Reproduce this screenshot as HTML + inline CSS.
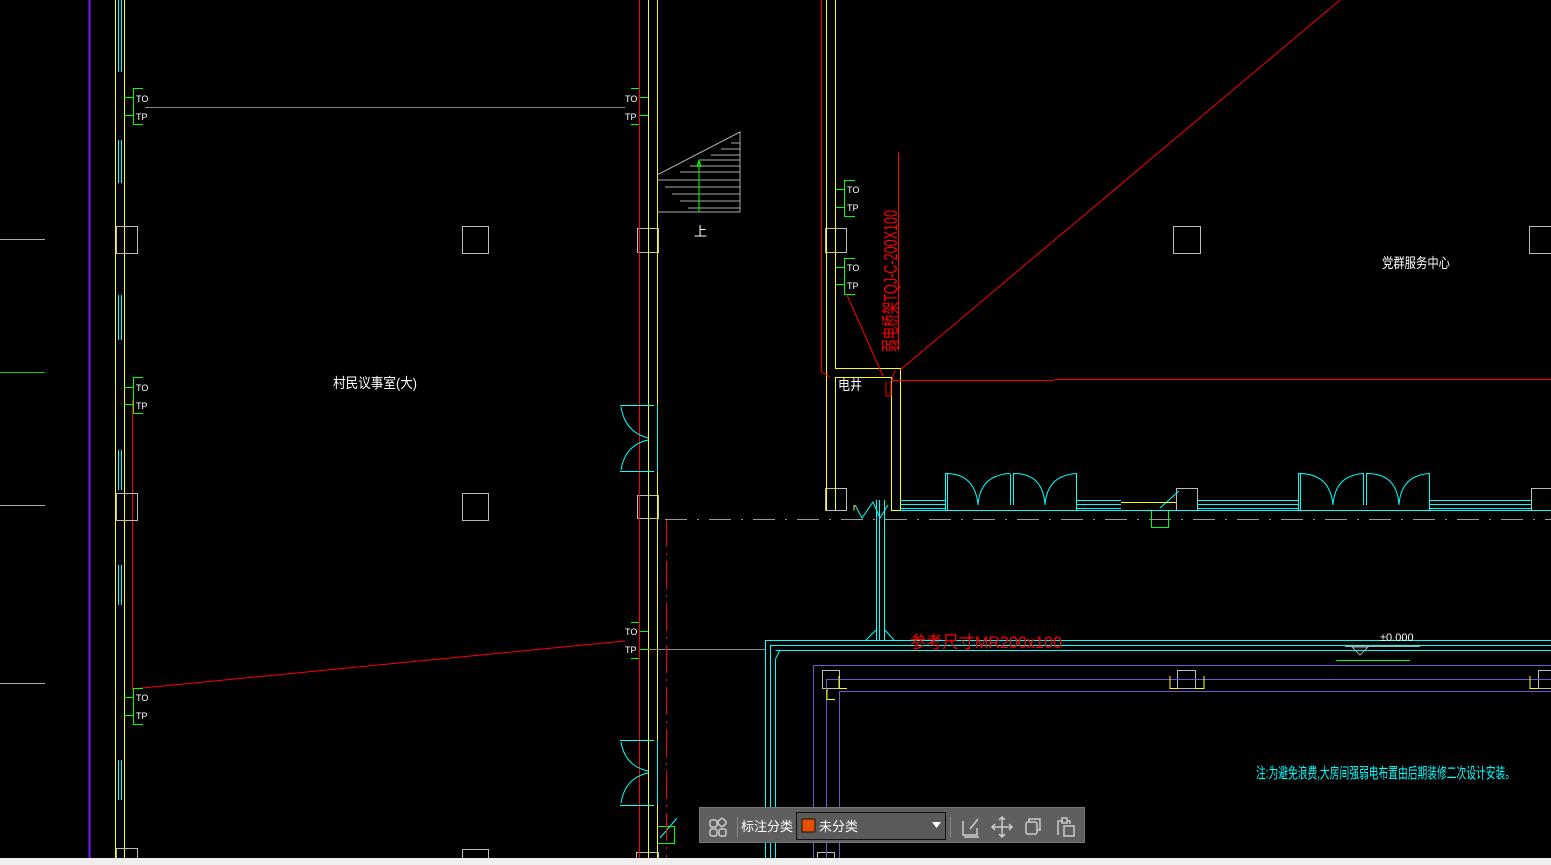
<!DOCTYPE html>
<html><head><meta charset="utf-8"><style>
html,body{margin:0;padding:0;background:#000;width:1551px;height:865px;overflow:hidden;font-family:"Liberation Sans","Noto Sans CJK SC",sans-serif}
svg{position:absolute;left:0;top:0}
.tb{position:absolute;left:699px;top:807px;width:386px;height:36px;background:#5f5f5f;border:1px solid #777;box-sizing:border-box}
.bot{position:absolute;left:0;top:858px;width:1551px;height:7px;background:#efefef}
</style></head><body>
<svg width="1551" height="865" viewBox="0 0 1551 865" font-family="Liberation Sans, Noto Sans CJK SC, sans-serif">
<g fill="none" stroke-width="1">
<line x1="0" y1="239.5" x2="45" y2="239.5" stroke="#aaa"/>
<line x1="0" y1="372.5" x2="45" y2="372.5" stroke="#0c0"/>
<line x1="0" y1="505.5" x2="45" y2="505.5" stroke="#aaa"/>
<line x1="0" y1="683.5" x2="45" y2="683.5" stroke="#aaa"/>
<line x1="89.5" y1="0" x2="89.5" y2="865" stroke="#7a1aff" stroke-width="2"/>
<line x1="115.5" y1="0" x2="115.5" y2="860" stroke="#ff0"/>
<line x1="124.5" y1="0" x2="124.5" y2="860" stroke="#ff0"/>
<g stroke="#0ff">
<path d="M118.5 0V72M121.5 0V72M118.5 140V183M121.5 140V183M118.5 295V340M121.5 295V340M118.5 565V605M121.5 565V605M118.5 760V800M121.5 760V800M118.5 450V490M121.5 450V490"/>
</g>
<line x1="132.5" y1="400" x2="132.5" y2="690" stroke="#f00"/>
<line x1="132" y1="689" x2="625" y2="641" stroke="#f00"/>
<line x1="145" y1="107.5" x2="625" y2="107.5" stroke="#888"/>
<g stroke="#bbb">
<rect x="116.5" y="226.5" width="21" height="27"/>
<rect x="116.5" y="493.5" width="21" height="27"/>
<rect x="116.5" y="848.5" width="21" height="15"/>
<rect x="462.5" y="226.5" width="26" height="27"/>
<rect x="462.5" y="493.5" width="26" height="27"/>
<rect x="462.5" y="849.5" width="26" height="15"/>
<rect x="637.5" y="228.5" width="21" height="24"/>
<rect x="637.5" y="495.5" width="21" height="23"/>
<rect x="825.5" y="228.5" width="21" height="24"/>
<rect x="825.5" y="488.5" width="21" height="22"/>
<rect x="1173.5" y="226.5" width="27" height="27"/>
<rect x="1529.5" y="226.5" width="27" height="27"/>
<rect x="1176.5" y="488.5" width="21" height="22"/>
<rect x="1531.5" y="488.5" width="21" height="22"/>
<rect x="822.5" y="670.5" width="17" height="18"/>
<rect x="1177.5" y="670.5" width="18" height="18"/>
<rect x="1538.5" y="670.5" width="18" height="18"/>
<rect x="636.5" y="852.5" width="22" height="12"/>
<rect x="817.5" y="852.5" width="17" height="12"/>
</g>
<g stroke="#0f0">
<path d="M143 88.5H133.5V124.5H143M124 97.5H133M124 115.5H133"/>
<path d="M143 377.5H133.5V413.5H143M124 387.5H133M124 404.5H133"/>
<path d="M143 688.5H133.5V724.5H143M124 697.5H133M124 715.5H133"/>
<path d="M631 88.5H639.5V124.5H631M648 97.5H640M648 115.5H640"/>
<path d="M631 622.5H639.5V658.5H631M648 631.5H640M648 649.5H640"/>
<path d="M855 180.5H844.5V216.5H855M836 189.5H844M836 207.5H844"/>
<path d="M855 258.5H844.5V294.5H855M836 267.5H844M836 284.5H844"/>
<path d="M1336 660.5H1410"/>
<rect x="657.5" y="826.5" width="17" height="17"/>
<rect x="1151.5" y="510.5" width="17" height="17"/>
</g>
<line x1="648.5" y1="0" x2="648.5" y2="860" stroke="#ff0"/>
<line x1="657.5" y1="0" x2="657.5" y2="860" stroke="#ff0"/>
<line x1="639.5" y1="0" x2="639.5" y2="860" stroke="#f00"/>
<line x1="648" y1="649.5" x2="765" y2="649.5" stroke="#888"/>
<g stroke="#0ff">
<path d="M657.5 405V472M620 405.5H654M620 471.5H654M621 407Q625 432 648 438M621 470Q625 445 648 440"/>
<path d="M657.5 740V805M620 740.5H654M620 805.5H654M621 742Q625 766 648 771M621 803Q625 778 648 773"/>
<line x1="660" y1="838" x2="677" y2="818"/>
<line x1="1160" y1="508" x2="1179" y2="491"/>
</g>
<g stroke="#aaa">
<path d="M657 175L740 132V212H657"/>
<path d="M657 180H740M665 187H740M672 194H740M680 201H740M688 208H740M680 172H740M690 166H740M700 160H740M711 155H740M721 149H740M731 143H740"/>
</g>
<path d="M699 160V212" stroke="#0f0"/>
<path d="M697 167L699 160L701 167" stroke="#0f0"/>
<g stroke="#ff0">
<path d="M826.5 0V510M835.5 0V368M835.5 377V510"/>
<path d="M835 368.5H900.5V510.5H891.5V377.5H835"/>
<path d="M900 510.5H945M1077 510.5H1298M1430 510.5H1551"/>
<path d="M1121 502.5H1176"/>
</g>
<path d="M821.5 0V372L830 377" stroke="#f00"/>
<g stroke="#f00">
<path d="M898.5 152V350"/>
<path d="M900 370L1340 0"/>
<path d="M891 380.5H1054M1054 379.5H1551"/>
<path d="M847 295L883 376M895 370L892 380M891 382V396H886V382"/>
<path d="M666.5 519V860" stroke-dasharray="28 6 2 6"/>
</g>
<g stroke="#0ff">
<path d="M900 500.5H945M900 504.5H945M900 508.5H945M1077 500.5H1121M1077 504.5H1121M1077 508.5H1121M1197 500.5H1298M1197 504.5H1298M1197 508.5H1298M1430 500.5H1531M1430 504.5H1531M1430 508.5H1531"/>
<path d="M900 510.5H1551"/>
<path d="M945.5 474V510M947.5 474V510M945 473.5Q975 473 978 505M1010 473.5Q980 475 978 505M1010.5 474V505M1013.5 474V505M1013 473.5Q1043 473 1045 505M1077 473.5Q1047 475 1045 505M1076.5 474V510"/>
<path d="M1298.5 474V510M1300.5 474V510M1298 473.5Q1330 473 1333 505M1364 473.5Q1335 475 1333 505M1363.5 474V505M1366.5 474V505M1366 473.5Q1397 473 1399 505M1430 473.5Q1401 475 1399 505M1429.5 474V510"/>
<path d="M855 505L862 518L873 502L880 518L888 505"/>
<path d="M876.5 500V640M879.5 500V640M884.5 500V640"/>
<path d="M876 630L866 640M885 630L894 640"/>
<path d="M765.5 640.5H1551M770.5 645.5H1551M775.5 650.5H1551"/>
<path d="M765.5 640V860M770.5 645V860M775.5 660V860M775 660L780 650"/>
</g>
<path d="M665 519.5H1551" stroke="#999" stroke-dasharray="22 10 2 10"/>
<g stroke="#6a5acd">
<path d="M813.5 860V665.5H1551"/>
<path d="M826.5 860V679.5H1551"/>
<path d="M839.5 860V691.5H1551"/>
</g>
<g stroke="#ff0">
<path d="M839 676V688.5H847M827 689V699.5H835"/>
<path d="M1170 676V688.5H1178M1195 688.5H1204V676"/>
<path d="M1530 676V688.5H1538"/>
<path d="M854 505V510.5"/>
</g>
<path d="M1352 647L1360 655L1368 647Z" stroke="#aaa"/>
<path d="M1345 646.5H1420" stroke="#aaa"/>
</g>
<g fill="#fff" font-size="9">
<text x="136" y="102">TO</text><text x="136" y="120">TP</text>
<text x="136" y="391">TO</text><text x="136" y="409">TP</text>
<text x="136" y="701">TO</text><text x="136" y="719">TP</text>
<text x="625" y="102">TO</text><text x="625" y="120">TP</text>
<text x="625" y="635">TO</text><text x="625" y="653">TP</text>
<text x="847" y="193">TO</text><text x="847" y="211">TP</text>
<text x="847" y="271">TO</text><text x="847" y="289">TP</text>
</g>
<g fill="#fff" font-size="14">
<text x="333" y="388" textLength="84" lengthAdjust="spacingAndGlyphs">村民议事室(大)</text>
<text x="1382" y="268" textLength="68" lengthAdjust="spacingAndGlyphs">党群服务中心</text>
<text x="838" y="390" textLength="24" lengthAdjust="spacingAndGlyphs">电井</text>
<text x="694" y="236" font-size="13">上</text>
</g>
<text x="1380" y="641" fill="#fff" font-size="11">±0.000</text>
<text x="910" y="648" fill="#f00" font-size="17" textLength="152" lengthAdjust="spacingAndGlyphs">参考尺寸MR200x100</text>
<text transform="translate(897,352) rotate(-90)" fill="#f00" font-size="18" textLength="142" lengthAdjust="spacingAndGlyphs">弱电桥架TQJ-C-200X100</text>
<text x="1256" y="778" fill="#0ff" font-size="15" textLength="259" lengthAdjust="spacingAndGlyphs">注:为避免浪费,大房间强弱电布置由后期装修二次设计安装。</text>
</svg>
<div class="tb">
<svg width="386" height="36" viewBox="0 0 386 36" style="position:absolute;left:0;top:0">
<g fill="none" stroke="#ccc" stroke-width="1.5">
<rect x="10" y="12" width="7" height="7" rx="2"/><rect x="10" y="21" width="7" height="7" rx="2"/><rect x="19" y="21" width="7" height="7" rx="2"/>
<rect x="18.5" y="11" width="7" height="7" rx="2" transform="rotate(45 22 14.5)"/>
</g>
<line x1="37.5" y1="9" x2="37.5" y2="29" stroke="#888"/>
<text x="41" y="23" fill="#fff" font-size="13" font-family="Liberation Sans, Noto Sans CJK SC, sans-serif">标注分类</text>
<rect x="96.5" y="4.5" width="149" height="27" fill="#5a5a5a" stroke="#111"/>
<rect x="102" y="11" width="13" height="13" fill="#e55000" stroke="#111"/>
<text x="119" y="23" fill="#fff" font-size="13" font-family="Liberation Sans, Noto Sans CJK SC, sans-serif">未分类</text>
<path d="M232 14H241L236.5 20Z" fill="#fff"/>
<line x1="250.5" y1="9" x2="250.5" y2="29" stroke="#888"/>
<g fill="none" stroke="#ccc" stroke-width="1.5">
<path d="M263 13V27H277V20M270 21L278 11M264 29H279"/>
<path d="M302 9V29M292 19H312M299 12L302 9L305 12M299 26L302 29L305 26M295 16L292 19L295 22M309 16L312 19L309 22"/>
<rect x="326" y="14" width="11" height="12" rx="2"/><path d="M329 14V11H340V22H337"/>
<path d="M358 27V13H363M367 13H370V16"/><rect x="362" y="10" width="5" height="5"/><rect x="364" y="18" width="10" height="10"/>
</g>
</svg>
</div>
<div class="bot"></div>
</body></html>
